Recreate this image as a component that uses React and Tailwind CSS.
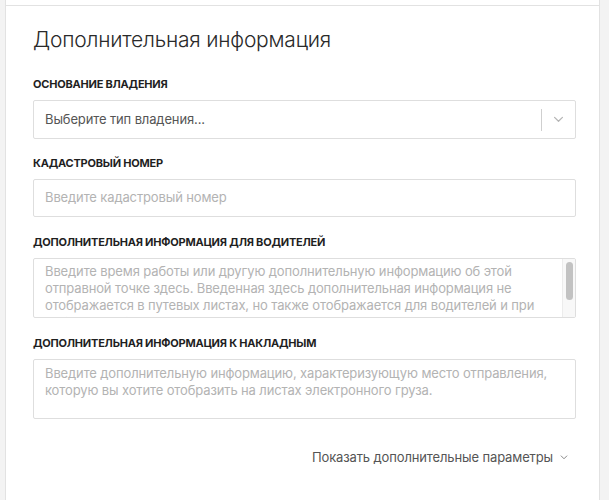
import React from 'react'

const fieldLabel = 'text-[11px] leading-[14px] font-bold uppercase tracking-[-0.02em] text-[#1f1f1f]'

const Chevron = ({ className }) => (
  <svg viewBox="0 0 12 8" className={className} fill="none" stroke="currentColor" strokeWidth="1.4" strokeLinecap="round" strokeLinejoin="round">
    <path d="M1.5 1.5 6 6l4.5-4.5" />
  </svg>
)

const App = () => {
  return (
    <div className="min-h-[500px] bg-[#f3f3f3] pl-[5px] pr-[9px] font-['Inter','Noto_Sans',sans-serif]">
      <div className="h-[5px] bg-white border-x border-[#e2e2e2]" />
      <div className="min-h-[495px] bg-white border-x border-t border-[#e2e2e2] pl-[27px] pr-[23px] pt-[20px]">
        <h2 className="text-[21px] leading-[28px] font-light tracking-[-0.01em] text-[#2a2a2a]">
          Дополнительная информация
        </h2>

        <div className={`${fieldLabel} mt-[23px] mb-[9px]`}>Основание владения</div>
        <div className="h-[39px] border border-[#dedede] rounded-[2px] flex items-center">
          <span className="flex-1 pl-[11px] text-[13px] tracking-[-0.01em] text-[#555]">Выберите тип владения...</span>
          <span className="w-px h-[22px] bg-[#cfcfcf]" />
          <span className="w-[33px] flex justify-center text-[#b5b5b5]">
            <Chevron className="w-[11px] h-[7px]" />
          </span>
        </div>

        <div className={`${fieldLabel} mt-[17px] mb-[9px]`}>Кадастровый номер</div>
        <div className="h-[38px] border border-[#dedede] rounded-[2px] flex items-center pl-[11px] text-[13px] tracking-[-0.01em] text-[#b3b3b3]">
          Введите кадастровый номер
        </div>

        <div className={`${fieldLabel} mt-[18px] mb-[9px]`}>Дополнительная информация для водителей</div>
        <div className="h-[60px] border border-[#dedede] rounded-[2px] flex overflow-hidden">
          <div className="flex-1 pl-[11px] pr-[20px] pt-[4px] text-[13px] leading-[17px] tracking-[-0.01em] text-[#b3b3b3]">
            Введите время работы или другую дополнительную информацию об этой отправной точке здесь. Введенная здесь дополнительная информация не отображается в путевых листах, но также отображается для водителей и при работе с мобильным приложением.
          </div>
          <div className="w-[13px] shrink-0 bg-[#f8f8f8] border-l border-[#ececec] pt-[3px] flex justify-center">
            <div className="w-[7px] h-[38px] rounded-full bg-[#c2c2c2]" />
          </div>
        </div>

        <div className={`${fieldLabel} mt-[18px] mb-[9px]`}>Дополнительная информация к накладным</div>
        <div className="h-[60px] border border-[#dedede] rounded-[2px] pl-[11px] pr-[12px] pt-[5px] text-[13px] leading-[17px] tracking-[-0.01em] text-[#b3b3b3]">
          Введите дополнительную информацию, характеризующую место отправления, которую вы хотите отобразить на листах электронного груза.
        </div>

        <div className="mt-[29px] flex justify-end items-center gap-[7px] pr-[8px] text-[13px] leading-[18px] tracking-[-0.01em] text-[#555]">
          <span>Показать дополнительные параметры</span>
          <Chevron className="w-[8px] h-[5px] text-[#777]" />
        </div>
      </div>
    </div>
  )
}

export default App
